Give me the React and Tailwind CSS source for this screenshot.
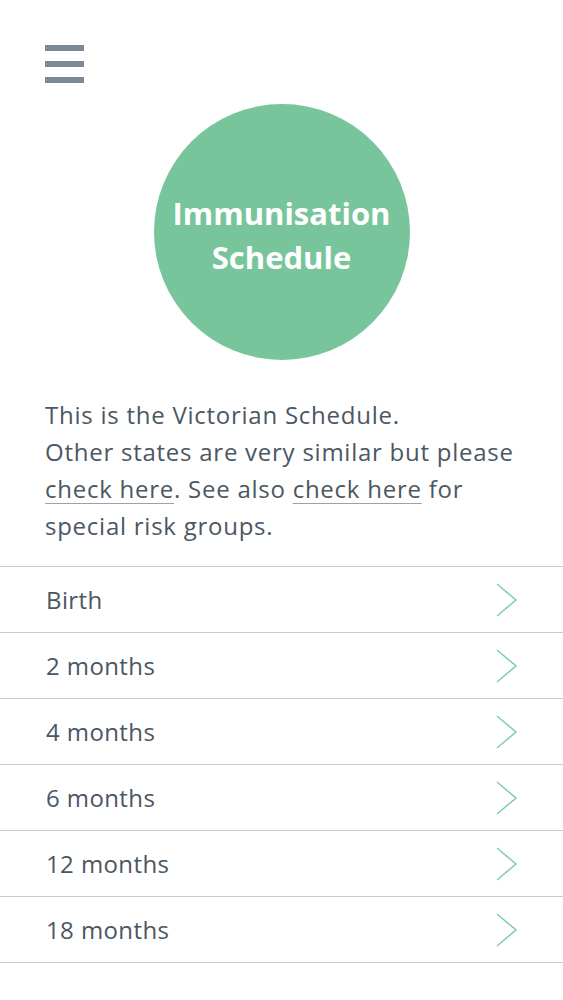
import { useState } from 'react'

const rows = ['Birth', '2 months', '4 months', '6 months', '12 months', '18 months']

function Chevron() {
  return (
    <svg width="24" height="36" viewBox="0 0 24 36" fill="none" className="shrink-0">
      <path d="M2 2 L21 18 L2 34" stroke="#80cdae" strokeWidth="1.5" strokeLinejoin="miter" />
    </svg>
  )
}

export default function App() {
  const [selected, setSelected] = useState(null)

  return (
    <div
      className="min-h-[1000px] bg-white text-[#4b5762]"
      style={{ fontFamily: '"Open Sans", Lato, sans-serif' }}
    >
      {/* Menu button */}
      <div className="pt-[45px] pl-[45px]">
        <button className="flex flex-col gap-[10px]" aria-label="Menu">
          <span className="block w-[39px] h-[6px] bg-[#7b8a96]" />
          <span className="block w-[39px] h-[6px] bg-[#7b8a96]" />
          <span className="block w-[39px] h-[6px] bg-[#7b8a96]" />
        </button>
      </div>

      {/* Title badge */}
      <div className="flex justify-center mt-[21px]">
        <div className="w-[256px] h-[256px] rounded-full bg-[#78c59c] flex items-center justify-center">
          <h1 className="text-white font-bold text-[31px] leading-[44px] text-center mt-[6px]">
            Immunisation
            <br />
            Schedule
          </h1>
        </div>
      </div>

      {/* Intro */}
      <p className="px-[45px] mt-[36px] text-[24px] leading-[37px] tracking-[0.75px]">
        This is the Victorian Schedule.
        <br />
        Other states are very similar but please{' '}
        <a href="#" className="underline decoration-[#9aa3ab] decoration-1 underline-offset-[5px]">
          check here
        </a>
        . See also{' '}
        <a href="#" className="underline decoration-[#9aa3ab] decoration-1 underline-offset-[5px]">
          check here
        </a>{' '}
        for special risk groups.
      </p>

      {/* Schedule list */}
      <ul className="mt-[22px] border-t border-[#c9cccf]">
        {rows.map(row => (
          <li key={row} className="border-b border-[#c9cccf]">
            <button
              onClick={() => setSelected(row)}
              className={`w-full h-[65px] flex items-center justify-between pl-[46px] pr-[44px] text-[24px] tracking-[0.4px] text-left ${
                selected === row ? 'bg-gray-50' : ''
              }`}
            >
              <span>{row}</span>
              <Chevron />
            </button>
          </li>
        ))}
      </ul>
    </div>
  )
}
